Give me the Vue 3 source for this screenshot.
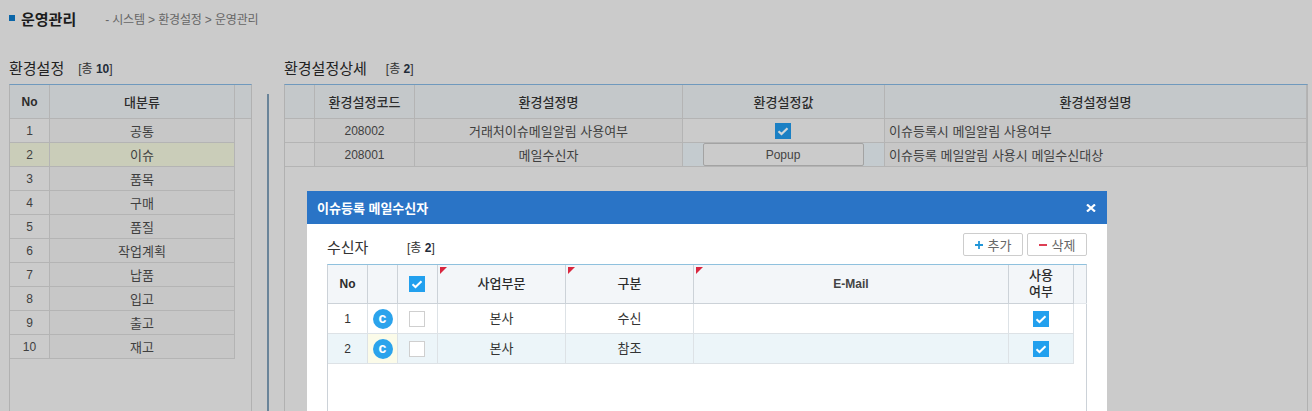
<script setup>
const categories = ['공통','이슈','품목','구매','품질','작업계획','납품','입고','출고','재고']
const details = [
  { code: '208002', name: '거래처이슈메일알림 사용여부', desc: '이슈등록시 메일알림 사용여부', popup: false },
  { code: '208001', name: '메일수신자', desc: '이슈등록 메일알림 사용시 메일수신대상', popup: true }
]
const receivers = [
  { no: 1, org: '본사', type: '수신' },
  { no: 2, org: '본사', type: '참조' }
]
</script>

<template>
  <div class="page">
    <header class="top">
      <i class="bullet"></i>
      <h1>운영관리</h1>
      <span class="crumb">- 시스템 &gt; 환경설정 &gt; 운영관리</span>
    </header>

    <div class="panes">
      <section class="left">
        <div class="title"><h2>환경설정</h2><span class="count">[총 <b>10</b>]</span></div>
        <div class="grid grid-left">
          <div class="row head">
            <div class="c no num">No</div>
            <div class="c">대분류</div>
            <div class="c spare"></div>
          </div>
          <div v-for="(c, i) in categories" :key="c" class="row body" :class="{ picked: i === 1 }">
            <div class="c no num">{{ i + 1 }}</div>
            <div class="c">{{ c }}</div>
          </div>
        </div>
      </section>

      <div class="split"><i></i></div>

      <section class="right">
        <div class="title"><h2>환경설정상세</h2><span class="count wide">[총 <b>2</b>]</span></div>
        <div class="grid grid-right">
          <div class="row head">
            <div class="c"></div>
            <div class="c">환경설정코드</div>
            <div class="c">환경설정명</div>
            <div class="c">환경설정값</div>
            <div class="c">환경설정설명</div>
          </div>
          <div v-for="d in details" :key="d.code" class="row body">
            <div class="c"></div>
            <div class="c num">{{ d.code }}</div>
            <div class="c">{{ d.name }}</div>
            <div class="c val shift" :class="{ tinted: d.popup }">
              <button v-if="d.popup" class="popup" type="button">Popup</button>
              <svg v-else class="check" viewBox="0 0 16 16"><rect width="16" height="16" fill="#1b80c4"/><path d="M3.500 8.200l3 2.800L12.500 5.200" fill="none" stroke="#cfd6da" stroke-width="2.200"/></svg>
            </div>
            <div class="c left-text">{{ d.desc }}</div>
          </div>
        </div>
      </section>
    </div>

    <div class="modal">
      <div class="m-head">
        <span>이슈등록 메일수신자</span>
        <svg class="close" viewBox="0 0 10 8" preserveAspectRatio="none"><path d="M1 .5l8 7M9 .5l-8 7" stroke="#fff" stroke-width="2.200" fill="none"/></svg>
      </div>
      <div class="m-body">
        <div class="m-bar">
          <h3>수신자</h3>
          <span class="m-count">[총 <b>2</b>]</span>
          <div class="actions">
            <button type="button" class="act"><svg viewBox="0 0 9 9"><path d="M4.500 0v9M0 4.500h9" stroke="#2196d8" stroke-width="2"/></svg>추가</button>
            <button type="button" class="act"><svg viewBox="0 0 9 9"><path d="M0 4.500h9" stroke="#d9263f" stroke-width="2"/></svg>삭제</button>
          </div>
        </div>
        <div class="m-grid">
          <div class="m-row m-hd">
            <div class="mc bold num">No</div>
            <div class="mc"></div>
            <div class="mc shift"><svg class="check" viewBox="0 0 16 16"><rect width="16" height="16" fill="#22a0ee"/><path d="M3.500 8.200l3 2.800L12.500 5.200" fill="none" stroke="#fff" stroke-width="2"/></svg></div>
            <div class="mc req">사업부문</div>
            <div class="mc req">구분</div>
            <div class="mc req bold-ish num">E-Mail</div>
            <div class="mc wrap">사용<br>여부</div>
            <div class="mc last"></div>
          </div>
          <div v-for="(r, i) in receivers" :key="r.no" class="m-row m-bd" :class="{ alt: i === 1 }">
            <div class="mc num">{{ r.no }}</div>
            <div class="mc flag"><span class="badge">c</span></div>
            <div class="mc shift"><i class="box"></i></div>
            <div class="mc">{{ r.org }}</div>
            <div class="mc">{{ r.type }}</div>
            <div class="mc"></div>
            <div class="mc"><svg class="check" viewBox="0 0 16 16"><rect width="16" height="16" fill="#22a0ee"/><path d="M3.500 8.200l3 2.800L12.500 5.200" fill="none" stroke="#fff" stroke-width="2"/></svg></div>
          </div>
        </div>
      </div>
    </div>
  </div>
</template>

<style>
html, body { margin: 0; background: #cbcbcb; overflow: hidden; }
</style>

<style scoped>
.page {
  position: relative;
  width: 1312px;
  height: 411px;
  overflow: hidden;
  background: #cbcbcb;
  font-family: "Liberation Sans", "Noto Sans CJK KR", sans-serif;
  font-size: 13px;
  color: #333;
}
.top {
  display: flex;
  align-items: center;
  height: 18px;
  padding: 9px 0 0 9px;
}
.bullet { width: 6px; height: 6px; background: #0a65a8; margin-right: 6px; }
h1 { margin: 0 29px 0 0; font-size: 15px; font-weight: 700; color: #1c1c1c; }
.crumb { font-size: 12px; letter-spacing: -0.15px; color: #666; }
.panes { display: flex; margin-top: 29px; height: 355px; }
.title { display: flex; align-items: center; height: 23px; padding-bottom: 5px; }
h2 { margin: 0; font-size: 15px; font-weight: 400; color: #222; }
.count { font-size: 12px; color: #333; margin-left: 14px; }
.count.wide { margin-left: 19px; }
.count b { color: #1f2c3a; }
.left { width: 243px; margin-left: 9px; flex: none; }
.grid { border: 1px solid #b1b1b1; border-top-color: #6f99bd; height: 400px; }
.grid-left { width: 241px; }
.split { width: 32px; flex: none; display: flex; justify-content: center; padding-top: 38px; box-sizing: border-box; }
.split i { display: block; width: 2px; height: 320px; background: #6a8499; }
.right { width: 1024px; flex: none; }
.grid-right { width: 1022px; }
.row { display: grid; box-sizing: border-box; }
.grid-left .row { grid-template-columns: 40px 185px 16px; }
.grid-left .row.body { grid-template-columns: 40px 185px; }
.grid-right .row { grid-template-columns: 30px 100px 268px 202px 422px; }
.head { height: 34px; background: #c4c8ca; font-weight: 500; }
.body { height: 24px; }
.c {
  display: flex;
  align-items: center;
  justify-content: center;
  border-right: 1px solid #b4b4b4;
  border-bottom: 1px solid #b4b4b4;
  box-sizing: border-box;
  white-space: nowrap;
}
.num { font-size: 12px; }
.head .c { color: #2c2c2c; }
.head .no { font-weight: 700; }
.body .c { background: #c7c7c7; color: #3f3f3f; }
.body .c.no { background: #cbcbcb; }
.body.picked .c { background: #cacdb9; }
.grid-right .body .c:first-child, .grid-right .body .c.val { background: #cbcbcb; }
.grid-right .body .c.tinted { background: #c4cbcf; }
.spare { border-right: 0; }
.left-text { justify-content: flex-start; padding-left: 4px; }
.check { display: block; width: 16px; height: 16px; }
.popup {
  width: 161px;
  height: 23px;
  padding: 0;
  border: 1px solid #a3a3a3;
  border-radius: 2px;
  background: #cbcbcb;
  color: #444;
  font: 12px "Liberation Sans", sans-serif;
}

.modal {
  position: absolute;
  left: 307px;
  top: 191px;
  width: 800px;
  height: 320px;
  background: #fff;
}
.m-head {
  display: flex;
  align-items: center;
  justify-content: space-between;
  height: 33px;
  padding: 0 11px 0 10px;
  background: #2a74c6;
  color: #fff;
  font-weight: 700;
}
.close { width: 10px; height: 8px; display: block; }
.m-body { padding: 9px 20px 0; }
.m-bar { display: flex; align-items: center; height: 27px; padding-bottom: 4px; }
h3 { margin: 0; font-size: 15px; font-weight: 400; color: #333; width: 80px; }
.m-count { font-size: 12px; color: #333; }
.m-count b { color: #1f2c3a; }
.actions { margin-left: auto; display: flex; gap: 4px; align-self: flex-start; }
.act {
  display: flex;
  align-items: center;
  justify-content: center;
  gap: 5px;
  width: 60px;
  height: 23px;
  padding: 0;
  border: 1px solid #cdcdcd;
  border-radius: 2px;
  background: #fff;
  color: #666;
  font: 13px "Liberation Sans", "Noto Sans CJK KR", sans-serif;
}
.act svg { width: 8px; height: 8px; }
.m-grid { border: 1px solid #ccd2d8; border-top-color: #8fc1de; height: 200px; }
.m-row { display: grid; grid-template-columns: 40px 30px 40px 128px 128px 315px 65px; box-sizing: border-box; }
.m-hd { grid-template-columns: 40px 30px 40px 128px 128px 315px 65px 13px; height: 39px; background: #f3f6f9; color: #2c2c2c; font-weight: 500; }
.m-bd { width: 746px; height: 30px; color: #333; }
.m-bd.alt { background: #ecf5f9; }
.mc {
  position: relative;
  display: flex;
  align-items: center;
  justify-content: center;
  text-align: center;
  line-height: 16px;
  box-sizing: border-box;
  border-right: 1px solid #dde2e6;
  border-bottom: 1px solid #dde2e6;
}
.m-hd .mc { border-color: #ccd2d8; }
.m-hd .last { border-right: 0; border-bottom-color: #e4e8ec; }
.shift { padding-right: 1px; }
.bold { font-weight: 700; }
.bold-ish { font-weight: 700; color: #444; }
.req::before {
  content: "";
  position: absolute;
  left: 2px;
  top: 2px;
  border-top: 7px solid #d9263f;
  border-right: 7px solid transparent;
}
.alt .flag { background: #fbfbe9; }
.badge {
  display: flex;
  align-items: center;
  justify-content: center;
  width: 20px;
  height: 20px;
  border-radius: 50%;
  background: #2ba3ec;
  color: #fff;
  font-size: 14px;
  font-weight: 700;
  line-height: 18px;
  padding-bottom: 2px;
  box-sizing: border-box;
}
.box { display: block; width: 14px; height: 14px; border: 1px solid #cfcfcf; background: #fff; }
</style>
